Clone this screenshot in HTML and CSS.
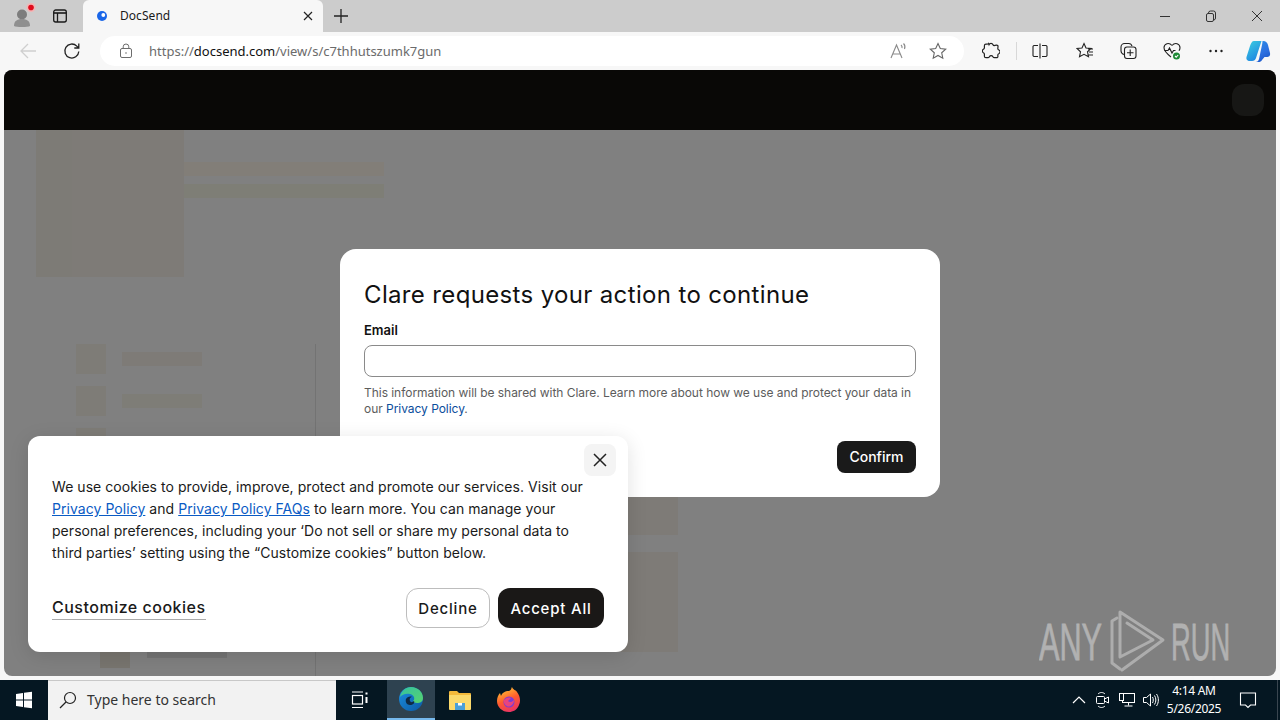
FILE: index.html
```html
<!DOCTYPE html>
<html lang="en">
<head>
<meta charset="utf-8">
<title>DocSend</title>
<link rel="stylesheet" href="styles.css">
</head>
<body>
<div class="tabstrip">
  <div class="profile">
    <svg width="40" height="32" viewBox="0 0 40 32"><circle cx="22" cy="14.500" r="5" fill="#7d7d7d"/><path d="M14 26c0-5 3-7 8-7s8 2 8 7c-2 1.300-14 1.300-16 0z" fill="#8f8f8f"/><circle cx="31" cy="7.500" r="4.500" fill="#f3b5b5"/><circle cx="31" cy="7.500" r="2.800" fill="#e00b1c"/></svg>
  </div>
  <div class="tabs-btn">
    <svg width="16" height="16" viewBox="0 0 16 16" fill="none" stroke="#1a1a1a" stroke-width="1.300"><rect x="1.700" y="2" width="12.600" height="12" rx="2"/><path d="M1.700 5h12.600" stroke-width="1.600"/><path d="M5.500 5v9"/></svg>
  </div>
  <div class="tab">
    <svg class="favicon" width="12" height="12" viewBox="0 0 12 12"><circle cx="6" cy="6" r="5" fill="#1a66e8"/><circle cx="7.300" cy="5" r="1.900" fill="#fff"/></svg>
    <span class="tab-title">DocSend</span>
    <svg class="tab-x" width="10" height="10" viewBox="0 0 10 10" stroke="#222" stroke-width="1.200"><path d="M1 1l8 8M9 1l-8 8"/></svg>
  </div>
  <div class="newtab">
    <svg width="16" height="16" viewBox="0 0 16 16" stroke="#222" stroke-width="1.300"><path d="M8 1v14M1 8h14"/></svg>
  </div>
  <div class="winctl">
    <svg width="46" height="32" viewBox="0 0 46 32" stroke="#333" fill="none"><path d="M18 16.500h10"/></svg>
    <svg width="46" height="32" viewBox="0 0 46 32" stroke="#333" fill="none"><rect x="18.500" y="13.500" width="7" height="8" rx="1.500"/><path d="M20.500 13.500v-.500a2 2 0 0 1 2-2h3a2 2 0 0 1 2 2v5a2 2 0 0 1-1.500 2"/></svg>
    <svg width="46" height="32" viewBox="0 0 46 32" stroke="#333" fill="none"><path d="M18 11l10 10M28 11l-10 10"/></svg>
  </div>
</div>
<div class="toolbar">
  <svg class="tb-back" width="18" height="18" viewBox="0 0 18 18" fill="none" stroke="#cfcfcf" stroke-width="1.300"><path d="M17 9H2M9 2L2 9l7 7"/></svg>
  <svg class="tb-reload" width="18" height="18" viewBox="0 0 18 18" fill="none" stroke="#222" stroke-width="1.300"><path d="M15.800 9.500a7 7 0 1 1-2-5.400L15.500 6M15.800 1.500V6h-4.500"/></svg>
  <div class="omnibox">
    <svg class="lock" width="14" height="16" viewBox="0 0 14 16" fill="none" stroke="#6d6d6d"><rect x="1.500" y="5.500" width="11" height="9" rx="1.500"/><path d="M4.200 5.500V3.800a2.800 2.800 0 0 1 5.600 0v1.700"/><circle cx="7" cy="10" r=".8" fill="#6d6d6d" stroke="none"/></svg>
    <span class="url"><span class="dim">https://</span>docsend.com<span class="dim">/view/s/c7thhutszumk7gun</span></span>
    <svg class="omni-read" width="18" height="18" viewBox="0 0 18 18" fill="none" stroke="#8a8a8a" stroke-width="1.100"><path d="M1 16L6.500 3 12 16M3 12h7"/><path d="M11 3c1 .8 1.300 2 1 3.200M13.500 1.500c1.500 1.500 1.800 3.500 1 5.500"/></svg>
    <svg class="omni-star" width="18" height="18" viewBox="0 0 18 18" fill="none" stroke="#666" stroke-width="1.100"><path d="M9 1.500l2.300 5 5.400.6-4 3.700 1.100 5.400L9 13.500l-4.800 2.700 1.100-5.400-4-3.700 5.400-.6z"/></svg>
  </div>
  <div class="tb-icons">
    <svg class="ext" width="18" height="18" viewBox="0 0 18 18" fill="none" stroke="#222" stroke-width="1.200"><path d="M7 2.700a2.200 2.200 0 0 1 4 0c.3.700 1 1 2 .700l1.500-.2c1-.1 1.600.5 1.500 1.500l-.2 1.800c0 .8.200 1.200 1 1.500a2 2 0 0 1 0 3.700c-.8.300-1 .8-1 1.500l.1 1c.1 1-.5 1.500-1.500 1.500h-2c-.8 0-1.200-.4-1.500-1a2 2 0 0 0-3.500 0c-.3.600-.8 1-1.500 1h-2c-1 0-1.500-.6-1.500-1.500v-2c0-.7-.4-1.200-1-1.500a2 2 0 0 1 0-3.500c.6-.3 1-.8 1-1.500v-2c0-1 .5-1.500 1.500-1.500h1c.8 0 1.400-.3 1.700-.7z"/></svg>
    <span class="tb-sep"></span>
    <svg class="split" width="16" height="16" viewBox="0 0 16 16" fill="none" stroke="#222" stroke-width="1.100"><path d="M6 2.500H2a1.500 1.500 0 0 0-1 1v9a1.500 1.500 0 0 0 1 1h4M10 2.500h4a1.500 1.500 0 0 1 1 1v9a1.500 1.500 0 0 1-1 1h-4M8 .5v15"/></svg>
    <svg class="favs" width="18" height="18" viewBox="0 0 18 18" fill="none" stroke="#222" stroke-width="1.100"><path d="M8 1.500l2 4.500 5 .5-3.500 3.300 1 5-4.500-2.500-4.500 2.500 1-5L1 6.500 6 6zM12 7h5M13 10h4M12 13h5"/></svg>
    <svg class="colls" width="18" height="18" viewBox="0 0 18 18" fill="none" stroke="#222" stroke-width="1.100"><path d="M5 12.500A4 4 0 0 1 2 9V5a3.500 3.500 0 0 1 3.500-3.500h4A3.500 3.500 0 0 1 13 4"/><rect x="5.500" y="5" width="11.500" height="11.500" rx="2.500"/><path d="M11.200 7.500v6.500M8 10.800h6.500"/></svg>
    <svg class="health" width="20" height="20" viewBox="0 0 20 20" fill="none" stroke="#222" stroke-width="1.100"><path d="M10 4.500C7 1 2 2.500 2 6.800c0 3 3 6 7 9.200M10 4.500c3-3.500 8-2 8 2.300 0 1-.3 2-1 3"/><path d="M2.500 9.500h3.500l1.500-2.500 2.500 5 1.500-2.500h2"/><circle cx="14.500" cy="15" r="3.500" fill="#1e8a36" stroke="none"/><path d="M13 15l1.200 1.200 2-2.200" stroke="#fff"/></svg>
    <svg class="more" width="16" height="16" viewBox="0 0 16 16" fill="#222"><circle cx="2.500" cy="8" r="1.200"/><circle cx="8" cy="8" r="1.200"/><circle cx="13.500" cy="8" r="1.200"/></svg>
    <svg class="copilot" width="26" height="26" viewBox="-1 -2 26 26"><defs><linearGradient id="cpa" x1="0" y1="0" x2="0.600" y2="1"><stop offset="0" stop-color="#3cd0e0"/><stop offset="1" stop-color="#1f86e2"/></linearGradient><linearGradient id="cpb" x1="0.200" y1="0" x2="0.600" y2="1"><stop offset="0" stop-color="#2b8ce6"/><stop offset=".6" stop-color="#2c6fe0"/><stop offset="1" stop-color="#1d58c8"/></linearGradient></defs><path d="M8 1h7.500L10 18c-.5 2-2 3-4 3H4c-3 0-4-2-3.500-4L4 6c1-3 2-5 4-5z" fill="url(#cpa)"/><path d="M16.500 1h.5c3 0 4.500 2 5 4l2 8c.5 3-1 4-3.500 4h-2l-2.500 3c-.7 1.500-2 2-3.500 2h-3c2 0 3-1 3.500-3L16 5c.5-2 .5-4 .5-4z" fill="url(#cpb)"/></svg>
  </div>
</div>
<div class="viewport">
  <div class="site-header"><span class="avatar"></span></div>
  <div class="page">
    <div class="hero">
      <div class="hero-img"></div>
      <div class="hero-lines">
        <div class="line tan"></div>
        <div class="line olive"></div>
      </div>
    </div>
    <div class="lower">
      <div class="sidebar">
        <div class="side-row"><span class="sq"></span><span class="bar"></span></div>
        <div class="side-row"><span class="sq"></span><span class="bar olive"></span></div>
        <div class="side-row"><span class="sq"></span></div>
        <div class="side-spacer"></div>
        <div class="side-row last"><span class="sq"></span><span class="bar short"></span></div>
      </div>
      <div class="doc">
        <div class="doc-a"></div>
        <div class="doc-b"></div>
      </div>
    </div>
    <svg class="watermark" width="196" height="64" viewBox="0 0 196 64" aria-label="ANY RUN">
      <text class="wm-text" transform="translate(0 51) scale(.59 1)">ANY</text>
      <path class="wm-mark" d="M78 9l-5 3v42l8 6"/>
      <path class="wm-mark" d="M88 14l26 17-33 17V3l43 28-41 30"/>
      <text class="wm-text" transform="translate(132 51) scale(.525 1)">RUN</text>
    </svg>
  </div>
  <div class="dialog">
    <h1 class="dlg-title">Clare requests your action to continue</h1>
    <label class="dlg-label" for="em">Email</label>
    <input class="dlg-input" id="em" type="text">
    <p class="dlg-help">This information will be shared with Clare. Learn more about how we use and protect your data in our <a class="dlg-link">Privacy Policy</a>.</p>
    <div class="dlg-actions"><button class="btn-confirm">Confirm</button></div>
  </div>
  <div class="cookie">
    <button class="ck-close"><svg width="14" height="14" viewBox="0 0 14 14" stroke="#222" stroke-width="1.500"><path d="M1 1l12 12M13 1L1 13"/></svg></button>
    <p class="ck-text">We use cookies to provide, improve, protect and promote our services. Visit our <a class="ck-link">Privacy Policy</a> and <a class="ck-link">Privacy Policy FAQs</a> to learn more. You can manage your personal preferences, including your ‘Do not sell or share my personal data to third parties’ setting using the “Customize cookies” button below.</p>
    <div class="ck-actions">
      <a class="ck-custom">Customize cookies</a>
      <div class="ck-btns">
        <button class="btn-decline">Decline</button>
        <button class="btn-accept">Accept All</button>
      </div>
    </div>
  </div>
</div>
<div class="taskbar">
  <div class="start"><svg width="18" height="18" viewBox="0 0 18 18" fill="#fff"><path d="M1 3l7-1v6.500H1zM9 1.800L17 .8v7.700H9zM1 9.500h7V16l-7-1zM9 9.500h8v7.700l-8-1z"/></svg></div>
  <div class="search">
    <svg width="20" height="20" viewBox="0 0 20 20" fill="none" stroke="#222" stroke-width="1.200"><circle cx="12" cy="8" r="5.500"/><path d="M8 12l-6 6"/></svg>
    <span class="search-text">Type here to search</span>
  </div>
  <div class="tb-task taskview"><svg width="18" height="18" viewBox="0 0 18 18" fill="none" stroke="#fff" stroke-width="1.200"><path d="M1 1h11M1 16.500h11"/><rect x="1.500" y="4.500" width="10" height="8.500"/><path d="M15.500 1.500v2M15.500 6v6"  stroke-width="2"/></svg></div>
  <div class="tb-task edge">
    <svg width="26" height="26" viewBox="0 0 26 26"><defs><linearGradient id="eg" x1="0" y1="0" x2="1" y2="1"><stop offset="0" stop-color="#35c1a0"/><stop offset="1" stop-color="#57d36f"/></linearGradient><linearGradient id="eb" x1="0" y1="0" x2="1" y2="1"><stop offset="0" stop-color="#1b8fe0"/><stop offset="1" stop-color="#0c59a4"/></linearGradient></defs><circle cx="13" cy="13" r="12" fill="url(#eb)"/><path d="M2 11C3 5 8 1 13 1c7 0 12 5 12 11 0 4-3 5-6 5-2 0-4-1-4-2 2-1 2-6-3-7-5-1-8 1-10 3z" fill="url(#eg)"/><path d="M16 15c1 2-1 4-4 4-3 0-5-3-4-6 1-2 4-3 6-2-1 0-3 1-2 4 .5 1.500 2.500 1.500 4 0z" fill="#0f2a44"/></svg>
  </div>
  <div class="tb-task explorer">
    <svg width="24" height="22" viewBox="0 0 24 22"><path d="M1 3a1 1 0 0 1 1-1h7l2 2h11a1 1 0 0 1 1 1v2H1z" fill="#f4b93a"/><path d="M1 6h22v14a1 1 0 0 1-1 1H2a1 1 0 0 1-1-1z" fill="#fbd96b"/><rect x="7" y="14" width="10" height="7" fill="#4a9fd8"/><rect x="10" y="14" width="4" height="2.500" fill="#fff"/></svg>
  </div>
  <div class="tb-task firefox">
    <svg width="24" height="26" viewBox="0 0 24 26"><defs><linearGradient id="ff" x1="0.300" y1="0" x2="0.700" y2="1"><stop offset="0" stop-color="#ffc933"/><stop offset=".5" stop-color="#ff5a2e"/><stop offset="1" stop-color="#e8306a"/></linearGradient></defs><path d="M12 4c3-1 2-3 3-4 1 3 4 3 5 5 3 4 4 9 2 13-2 5-6 7-10 7C5 25 0 20 0 14c0-3 1-6 3-8l1 3c1-3 4-5 8-5z" fill="url(#ff)"/><circle cx="12" cy="15" r="5.500" fill="#7a3bd6"/><path d="M7 13c2-2 4-3 7-2l-3 3c2 2 4 1 6-1 0 4-3 6.500-5.500 6.500S6 16 7 13z" fill="#e8447e"/></svg>
  </div>
  <div class="tray">
    <span class="tray-slot"><svg width="16" height="16" viewBox="0 0 16 16" fill="none" stroke="#fff" stroke-width="1.200"><path d="M2 11l6-6 6 6"/></svg></span>
    <span class="tray-slot"><svg width="16" height="18" viewBox="0 0 16 18" fill="none" stroke="#fff"><rect x="1.500" y="5.500" width="8" height="7" rx="1"/><path d="M9.500 8l4-2v6l-4-2M3 3c2-2 5-2 7 0M3 15c2 2 5 2 7 0"/></svg></span>
    <span class="tray-slot"><svg width="18" height="16" viewBox="0 0 18 16" fill="none" stroke="#fff"><rect x="4.500" y="1.500" width="12" height="9"/><rect x="1.500" y="1.500" width="4" height="7" fill="#051722"/><path d="M10.500 10.500v3M6.500 14h8"/></svg></span>
    <span class="tray-slot"><svg width="18" height="16" viewBox="0 0 18 16" fill="none" stroke="#fff"><path d="M1.500 5.500h3l4-3.500v12l-4-3.500h-3zM10.500 5c1 1.500 1 4.500 0 6M12.500 3.500c1.800 2.500 1.800 6.500 0 9M14.500 2c2.500 3.500 2.500 8.500 0 12"/></svg></span>
    <div class="clock"><span>4:14 AM</span><span>5/26/2025</span></div>
    <span class="notif-slot"><svg width="18" height="18" viewBox="0 0 18 18" fill="none" stroke="#fff" stroke-width="1.100"><path d="M1.500 2h15v12h-5l-2.500 2.500L6.500 14h-5z"/></svg></span>
    <span class="showdesk"></span>
  </div>
</div>
</body>
</html>
```
FILE: styles.css
```css
* { box-sizing: border-box; }
html, body { margin: 0; padding: 0; }
body {
  width: 1280px; height: 720px; overflow: hidden;
  display: flex; flex-direction: column;
  background: #f7f7f7;
  font-family: "Noto Sans", sans-serif;
}
.tabstrip { height: 32px; flex: none; background: #cccccc; display: flex; align-items: flex-end; }
.profile { width: 40px; height: 32px; flex: none; }
.profile svg { display: block; }
.tabs-btn { width: 40px; height: 32px; display: flex; align-items: center; justify-content: center; flex: none; }
.tab {
  width: 240px; height: 32px; margin-left: 3px; flex: none;
  background: #f7f7f7; border-radius: 6px 6px 0 0;
  display: flex; align-items: center; padding: 0 0 1px 13px;
}
.favicon { flex: none; }
.tab-title { font-size: 12px; color: #1a1a1a; margin-left: 12px; flex: 1; letter-spacing: .05px; }
.tab-x { margin-right: 10px; }
.newtab { width: 36px; height: 32px; display: flex; align-items: center; justify-content: center; }
.winctl { margin-left: auto; display: flex; height: 32px; }
.winctl svg { display: block; }
.toolbar { height: 38px; flex: none; background: #f7f7f7; display: flex; align-items: center; }
.tb-back { margin-left: 19px; }
.tb-reload { margin-left: 26px; }
.omnibox {
  margin-left: 19px; width: 864px; height: 30px;
  background: #fff; border-radius: 15px;
  display: flex; align-items: center; padding-left: 19px;
}
.lock { flex: none; }
.url { font-size: 13px; margin-left: 16px; color: #111; flex: 1; white-space: nowrap; }
.dim { color: #6b6b6b; }
.omni-read { margin-right: 21px; flex: none; }
.omni-star { margin-right: 17px; flex: none; }
.tb-icons { flex: 1; display: flex; align-items: center; padding-left: 18px; }
.ext { margin-right: 16px; }
.tb-sep { width: 1px; height: 18px; background: #d8d8d8; margin-right: 15px; }
.split { margin-right: 28px; }
.favs { margin-right: 25px; }
.colls { margin-right: 25px; }
.health { margin-right: 26px; }
.more { margin-right: 21px; }
.viewport {
  position: relative; flex: none; height: 606px; margin: 0 4px;
  border-radius: 8px; overflow: hidden; background: #808080;
  display: flex; flex-direction: column;
}
.site-header { height: 60px; flex: none; background: #090806; display: flex; align-items: center; justify-content: flex-end; padding-right: 12px; }
.avatar { width: 32px; height: 32px; border-radius: 12px; background: #171715; }
.page { flex: 1; position: relative; padding-left: 32px; }
.hero { display: flex; }
.hero-img { width: 148px; height: 147px; flex: none; background: linear-gradient(90deg, #7d7b76 0 24%, #7e7b77 24%); }
.hero-lines { padding-top: 32px; display: flex; flex-direction: column; gap: 8px; }
.line { width: 200px; height: 14px; background: #827e78; }
.line.olive { background: #7e7e76; }
.lower { display: flex; margin-top: 67px; height: 332px; }
.sidebar { width: 280px; flex: none; padding-left: 40px; border-right: 1px solid #737373; display: flex; flex-direction: column; gap: 12px; height: 332px; }
.side-row { display: flex; align-items: center; gap: 16px; height: 30px; flex: none; }
.sq { width: 30px; height: 30px; background: #7e7c77; flex: none; }
.bar { width: 80px; height: 14px; background: #7e7b77; }
.bar.olive { background: #7e7d77; }
.side-spacer { flex: 1; }
.side-row.last { margin: 0 0 8px 24px; gap: 17px; height: 20px; }
.side-row.last .sq { height: 18px; align-self: flex-end; background: #78756f; }
.side-row.last .bar { height: 10px; align-self: flex-start; background: #747474; }
.doc { flex: 1; padding-top: 153px; display: flex; flex-direction: column; gap: 17px; }
.doc-a { width: 362px; height: 38px; background: #7e7b77; }
.doc-b { width: 362px; height: 100px; background: #7e7b77; }
.watermark { position: absolute; left: 1035px; top: 479px; }
.wm-text { font: 400 52px "Liberation Sans", sans-serif; fill: #b1b1b1; stroke: #b1b1b1; stroke-width: .8px; }
.wm-mark { fill: none; stroke: #adadad; stroke-width: 3px; stroke-linejoin: round; stroke-linecap: round; }
.dialog {
  position: absolute; left: 336px; top: 179px; width: 600px; height: 248px;
  background: #fff; border-radius: 16px; padding: 29px 24px 24px;
  font-family: Inter, sans-serif; display: flex; flex-direction: column;
}
.dlg-title { margin: 0; font-size: 24px; font-weight: 400; line-height: 34px; color: #111; letter-spacing: .35px; }
.dlg-label { margin-top: 10px; font-size: 13px; font-weight: 600; line-height: 16px; color: #111; }
.dlg-input { margin-top: 7px; height: 32px; width: 552px; border: 1px solid #8a8a8a; border-radius: 8px; background: #fff; padding: 0; flex: none; }
.dlg-help { margin: 8px 0 0; font-size: 12px; line-height: 16px; color: #5c5c5c; letter-spacing: -.04px; }
.dlg-link { color: #0a4d9c; }
.dlg-actions { margin-top: auto; display: flex; justify-content: flex-end; }
.btn-confirm { width: 79px; height: 32px; border: 0; border-radius: 8px; background: #1a1a1a; color: #fff; font: 500 14px Inter, sans-serif; padding: 0 0 1px; }
.cookie {
  position: absolute; left: 24px; top: 366px; width: 600px; height: 216px;
  background: #fff; border-radius: 12px; padding: 40px 24px 24px;
  font-family: Inter, sans-serif; box-shadow: 0 4px 20px rgba(0,0,0,.12);
  display: flex; flex-direction: column;
}
.ck-close { position: absolute; right: 12px; top: 8px; width: 32px; height: 32px; border: 0; border-radius: 8px; background: #f4f4f4; display: flex; align-items: center; justify-content: center; padding: 0; }
.ck-text { margin: 0; max-width: 542px; font-size: 14px; line-height: 22px; color: #1a1a1a; letter-spacing: .05px; }
.ck-link { color: #0a5bc4; text-decoration: underline; }
.ck-actions { margin-top: auto; display: flex; align-items: center; justify-content: space-between; }
.ck-custom { font: 500 16px Inter, sans-serif; color: #1a1a1a; border-bottom: 1px solid #aaa; padding: 1px 0 2px; letter-spacing: .5px; }
.ck-btns { display: flex; gap: 8px; }
.btn-decline { width: 84px; height: 40px; border: 1px solid #bdbdbd; border-radius: 12px; background: #fff; color: #1a1a1a; font: 500 15px Inter, sans-serif; padding: 0; letter-spacing: .8px; }
.btn-accept { width: 106px; height: 40px; border: 0; border-radius: 12px; background: #1a1817; color: #fff; font: 500 15px Inter, sans-serif; padding: 0; letter-spacing: .8px; }
.taskbar { height: 40px; flex: none; margin-top: 4px; background: #051722; display: flex; align-items: stretch; color: #fff; }
.start { width: 48px; display: flex; align-items: center; justify-content: center; flex: none; }
.search { width: 288px; background: #f2f2f2; display: flex; align-items: center; padding: 0 0 2px 10px; gap: 9px; flex: none; border-top: 1px solid #c8c8c8; }
.search-text { font-size: 14px; color: #333; }
.tb-task { width: 48px; display: flex; align-items: center; justify-content: center; flex: none; }
.edge { background: #2e4250; border-bottom: 2px solid #76b9ed; margin-left: 3px; }
.explorer { width: 49px; }
.firefox { width: 50px; }
.tray { margin-left: auto; display: flex; align-items: center; }
.tray-slot { width: 24px; display: flex; justify-content: center; flex: none; }
.clock { display: flex; flex-direction: column; align-items: center; font-size: 12px; line-height: 18px; width: 62px; letter-spacing: -.3px; flex: none; }
.notif-slot { width: 46px; display: flex; justify-content: center; flex: none; }
.showdesk { width: 1px; height: 40px; background: #3a4650; margin: 0 2px 0 6px; }
```
